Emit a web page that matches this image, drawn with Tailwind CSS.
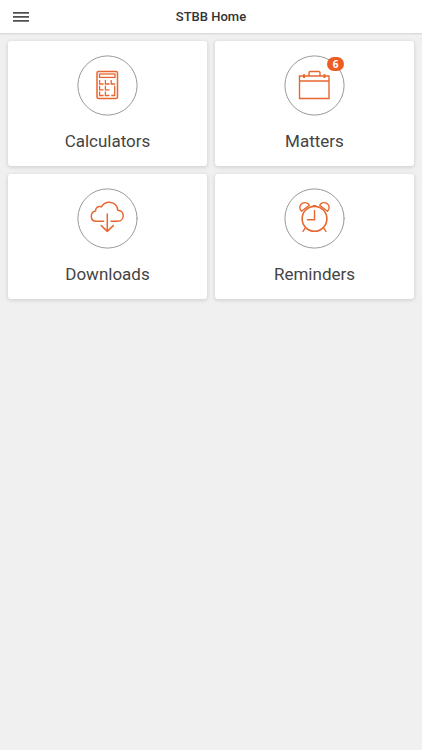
<!DOCTYPE html>
<html lang="en">
<head>
<meta charset="utf-8">
<meta name="viewport" content="width=device-width, initial-scale=1">
<title>STBB Home</title>
<script src="https://cdn.jsdelivr.net/npm/@tailwindcss/browser@4"></script>
</head>
<body class="min-h-screen bg-[#f0f0f0] font-['Roboto',sans-serif] text-[#444]">
<header class="grid h-[34px] grid-cols-[1fr_auto_1fr] items-center border-b border-[#dcdada] bg-white px-3 shadow-[0_1px_1px_rgba(0,0,0,0.03)]">
  <button type="button" aria-label="Open menu" class="flex h-6 w-5 items-center">
    <svg class="h-3 w-[18px]" viewBox="0 0 18 12" fill="#505050" aria-hidden="true"><path d="M1 1h16v1.8H1zM1 5h16v1.8H1zM1 9h16v1.8H1z"/></svg>
  </button>
  <h1 class="text-[13px] leading-4 font-medium text-[#333]">STBB Home</h1>
</header>
<main>
  <nav aria-label="Home" class="grid grid-cols-2 gap-2 px-2 pt-[7px]">
    <a href="#calculators" class="flex h-[125px] flex-col items-center rounded-[3px] bg-white pt-[14px] shadow-[0_1px_4px_rgba(0,0,0,0.16)]">
      <svg class="size-[61px]" viewBox="0 0 61 61" fill="none" stroke="#e8662f" stroke-width="1.3" aria-hidden="true">
        <circle cx="30.5" cy="30.5" r="29.6" stroke="#999" stroke-width="1"/>
        <rect x="20" y="16.5" width="20.5" height="27" rx="1.5" stroke-width="1.5"/>
        <rect x="22.5" y="19" width="15.5" height="3.4"/>
        <path d="M22.6 25v4h4M28.4 25v4h4M34.2 25v4h4M22.6 30.8v4h4M28.4 30.8v4h4M22.6 36.5v4h4M28.4 36.5v4h4M34.2 40.5h3.5v-9.7"/>
      </svg>
      <span class="mt-[13px] text-[17px] leading-6">Calculators</span>
    </a>
    <a href="#matters" class="flex h-[125px] flex-col items-center rounded-[3px] bg-white pt-[14px] shadow-[0_1px_4px_rgba(0,0,0,0.16)]">
      <span class="relative">
        <svg class="size-[61px]" viewBox="0 0 61 61" fill="none" stroke="#e8662f" stroke-width="1.4" aria-hidden="true">
          <circle cx="30.5" cy="30.5" r="29.6" stroke="#999" stroke-width="1"/>
          <path d="M15.5 21h29.5v22.5h-29.5zM15.5 26h29.5M25 21v-3.2q0-1.3 1.3-1.3h8.4q1.3 0 1.3 1.3V21"/>
          <path d="M20 19.2v3.8M40.5 19.2v3.8" stroke-width="2"/>
        </svg>
        <span class="absolute top-[2px] right-px flex h-[14px] w-[17px] items-center justify-center rounded-full bg-[#ed5d22] font-['Noto_Sans',sans-serif] text-[10px] leading-none font-bold text-white">6</span>
      </span>
      <span class="mt-[13px] text-[17px] leading-6">Matters</span>
    </a>
    <a href="#downloads" class="flex h-[125px] flex-col items-center rounded-[3px] bg-white pt-[14px] shadow-[0_1px_4px_rgba(0,0,0,0.16)]">
      <svg class="size-[61px]" viewBox="0 0 61 61" fill="none" stroke="#e8662f" stroke-width="1.5" stroke-linecap="round" stroke-linejoin="round" aria-hidden="true">
        <circle cx="30.5" cy="30.5" r="29.6" stroke="#999" stroke-width="1"/>
        <path d="M26.5 33.3H19.6C16.2 33.3 14.3 31 14.3 28.2C14.3 25.5 16 23.6 18.6 23.1C18.2 19.7 21 17.8 24.5 18.8C26.2 15.8 29 14.2 32.2 14.2C37.2 14.2 40.7 17.8 40.7 22.2C43.9 22.4 46.2 24.7 46.2 27.7C46.2 31 43.8 33.3 40.6 33.3H34"/>
        <path d="M30.3 26v17.4M24.3 37.6l6 5.8 6-5.8"/>
      </svg>
      <span class="mt-[13px] text-[17px] leading-6">Downloads</span>
    </a>
    <a href="#reminders" class="flex h-[125px] flex-col items-center rounded-[3px] bg-white pt-[14px] shadow-[0_1px_4px_rgba(0,0,0,0.16)]">
      <svg class="size-[61px]" viewBox="0 0 61 61" fill="none" stroke="#e8662f" stroke-width="1.4" stroke-linecap="round" stroke-linejoin="round" aria-hidden="true">
        <circle cx="30.5" cy="30.5" r="29.6" stroke="#999" stroke-width="1"/>
        <circle cx="30.5" cy="30.8" r="12.4" stroke-width="1.6"/>
        <path d="M30.5 22.5v9.3h-7M29.5 17.7h2"/>
        <path d="M17.5 23.3C14.7 20.2 15.6 16.7 18.6 15.2C21.4 13.9 24.3 14.8 25.3 17.2ZM43.5 23.3C46.3 20.2 45.4 16.7 42.4 15.2C39.6 13.9 36.7 14.8 35.7 17.2Z"/>
        <path d="M21.2 40.2l-2.2 3.2M39.8 40.2l2.2 3.2"/>
      </svg>
      <span class="mt-[13px] text-[17px] leading-6">Reminders</span>
    </a>
  </nav>
</main>
</body>
</html>
